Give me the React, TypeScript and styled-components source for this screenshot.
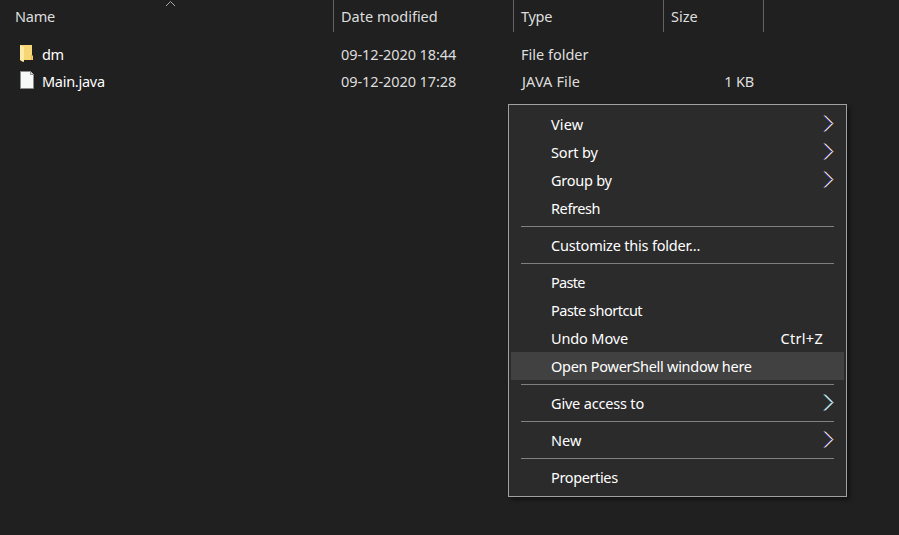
import React from 'react';
import styled, { createGlobalStyle } from 'styled-components';

const GlobalStyle = createGlobalStyle`
  html, body { margin: 0; background: #202020; overflow: hidden; }
`;

const Explorer = styled.main`
  position: relative;
  width: 899px;
  height: 535px;
  background: #202020;
  color: #dedede;
  font: 14.5px 'Noto Sans', 'Open Sans', sans-serif;
  white-space: pre;
  overflow: hidden;
`;

const HeaderRow = styled.header`
  display: grid;
  grid-template-columns: 334px 180px 150px 100px;
  height: 32px;
  line-height: 32px;
`;

const HeaderCell = styled.div<{ $first?: boolean }>`
  position: relative;
  border-right: 1px solid #636363;
  padding-left: ${(p) => (p.$first ? 15 : 7)}px;
`;

const SortArrow = styled.svg`
  position: absolute;
  left: 165px;
  top: 0;
`;

const FileList = styled.section`
  padding-top: 9px;
`;

const FileRow = styled.div`
  display: grid;
  grid-template-columns: 334px 180px 150px 100px;
  height: 27px;
  line-height: 27px;
`;

const NameCell = styled.div`
  display: flex;
  padding-left: 19px;
  color: #ffffff;
`;

const IconSlot = styled.span`
  display: flex;
  width: 23px;
  padding-top: 2px;
`;

const Cell = styled.div`
  padding-left: 7px;
`;

const SizeCell = styled.div`
  padding-right: 10px;
  text-align: right;
`;

const Label = styled.span<{ $track?: number; $shift?: number }>`
  letter-spacing: ${(p) => p.$track ?? 0}px;
  margin-left: ${(p) => p.$shift ?? 0}px;
`;

const Menu = styled.nav`
  position: absolute;
  left: 508px;
  top: 104px;
  box-sizing: border-box;
  width: 339px;
  height: 393px;
  padding: 5px 2px;
  border: 1px solid #a0a0a0;
  background: #2b2b2b;
  box-shadow: 3px 3px 4px rgba(0, 0, 0, 0.4);
  color: #ffffff;
`;

const MenuItem = styled.div<{ $active?: boolean }>`
  display: flex;
  justify-content: space-between;
  height: 28px;
  padding: 0 10px 0 40px;
  line-height: 28px;
  background: ${(p) => (p.$active ? '#414141' : 'transparent')};
`;

const Shortcut = styled.span`
  padding-right: 11px;
  letter-spacing: 0.3px;
`;

const Separator = styled.div`
  height: 1px;
  margin: 4px 10px;
  background: #808080;
`;

const ChevronSvg = styled.svg`
  margin-top: 5px;
`;

const Chevron = ({ cool }: { cool?: boolean }) => (
  <ChevronSvg width="11" height="17" viewBox="0 0 11 17" fill="none" strokeWidth="1">
    <path d="M.4.5 8.4 8.5.4 16.5" stroke={cool ? '#3aa0c8' : '#2f4fd8'} />
    <path d="M2.3.5 10.3 8.5 2.3 16.5" stroke={cool ? '#a8b8a0' : '#d98a48'} />
    <path d="M1.4.5 9.4 8.5 1.4 16.5" stroke="#ffffff" strokeWidth=".9" />
  </ChevronSvg>
);

const FolderIcon = () => (
  <svg width="14" height="19" viewBox="0 0 14 19">
    <path d="M1 2H13V12L14 13V17H4V19L1 17Z" fill="#f3cf6b" />
    <path d="M4 2H13V12L13 17H5Z" fill="#f7d775" />
    <path d="M1 2 5 4V19L1 17Z" fill="#ffe9a6" />
    <path d="M12 12H13V17H12Z" fill="#e5b951" />
  </svg>
);

const FileIcon = () => (
  <svg width="16" height="20" viewBox="0 0 16 20">
    <path d="M1.5 1.5H11.5L14.5 4.5V18.5H1.5Z" fill="#f7f8f8" stroke="#8c8c8c" />
    <path d="M11.5 1.5V4.5H14.5" fill="#e2e2e2" stroke="#8c8c8c" />
  </svg>
);

type Entry = {
  label: string;
  track: number;
  sub?: boolean;
  cool?: boolean;
  keys?: string;
  active?: boolean;
};

const groups: Entry[][] = [
  [
    { label: 'View', track: 0.1, sub: true },
    { label: 'Sort by', track: -0.15, sub: true },
    { label: 'Group by', track: -0.25, sub: true },
    { label: 'Refresh', track: -0.4 },
  ],
  [{ label: 'Customize this folder...', track: -0.19 }],
  [
    { label: 'Paste', track: -0.7 },
    { label: 'Paste shortcut', track: -0.5 },
    { label: 'Undo Move', track: -0.13, keys: 'Ctrl+Z' },
    { label: 'Open PowerShell window here', track: -0.27, active: true },
  ],
  [{ label: 'Give access to', track: -0.18, sub: true, cool: true }],
  [{ label: 'New', track: 0, sub: true }],
  [{ label: 'Properties', track: -0.37 }],
];

export default function App() {
  return (
    <>
      <GlobalStyle />
      <Explorer>
        <HeaderRow>
          <HeaderCell $first>
            <Label $track={-0.2}>Name</Label>
            <SortArrow width="11" height="8" viewBox="0 0 11 8" fill="none">
              <path d="M1 6 5.5 1.5 10 6" stroke="#a8a8a8" />
            </SortArrow>
          </HeaderCell>
          <HeaderCell><Label>Date modified</Label></HeaderCell>
          <HeaderCell><Label $track={-0.3}>Type</Label></HeaderCell>
          <HeaderCell><Label>Size</Label></HeaderCell>
        </HeaderRow>
        <FileList>
          <FileRow>
            <NameCell>
              <IconSlot><FolderIcon /></IconSlot>
              <Label $track={-0.4}>dm</Label>
            </NameCell>
            <Cell><Label $track={-0.08}>09-12-2020 18:44</Label></Cell>
            <Cell><Label>File folder</Label></Cell>
          </FileRow>
          <FileRow>
            <NameCell>
              <IconSlot><FileIcon /></IconSlot>
              <Label $track={-0.28}>Main.java</Label>
            </NameCell>
            <Cell><Label $track={-0.08}>09-12-2020 17:28</Label></Cell>
            <Cell><Label $track={0.12} $shift={1}>JAVA File</Label></Cell>
            <SizeCell><Label $track={-0.15}>1 KB</Label></SizeCell>
          </FileRow>
        </FileList>
        <Menu>
          {groups.map((group, i) => (
            <React.Fragment key={group[0].label}>
              {i > 0 && <Separator />}
              {group.map((e) => (
                <MenuItem key={e.label} $active={e.active}>
                  <Label $track={e.track}>{e.label}</Label>
                  {e.sub && <Chevron cool={e.cool} />}
                  {e.keys && <Shortcut>{e.keys}</Shortcut>}
                </MenuItem>
              ))}
            </React.Fragment>
          ))}
        </Menu>
      </Explorer>
    </>
  );
}
